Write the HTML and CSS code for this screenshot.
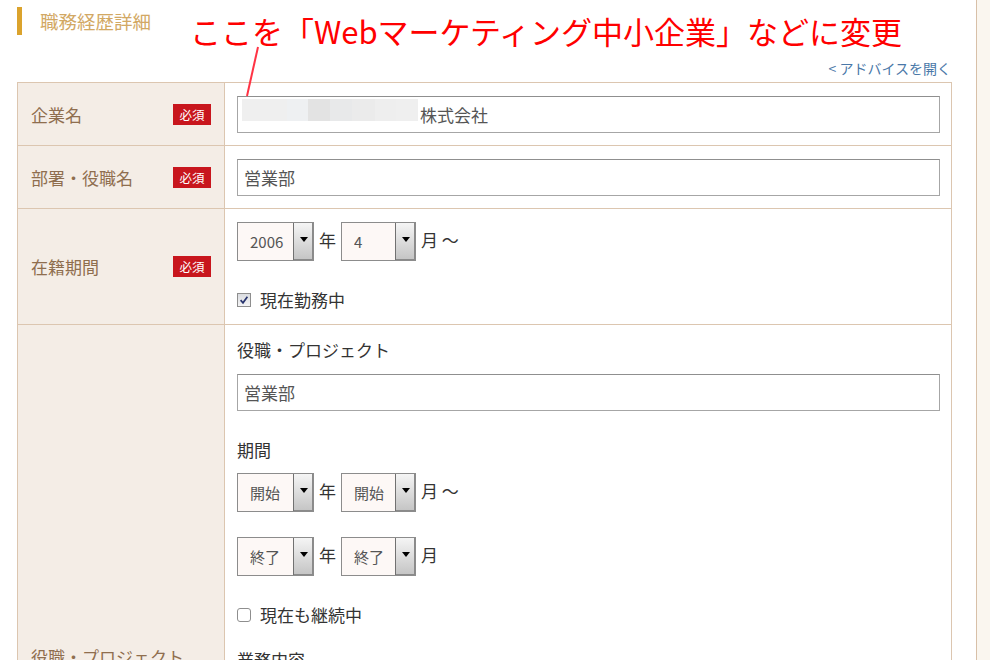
FILE: index.html
```html
<!DOCTYPE html>
<html lang="ja">
<head>
    <meta charset="UTF-8" />
    <title>職務経歴詳細</title>
    <link rel="stylesheet" href="styles.css">
</head>
<body>
<div class="page">
    <div class="main">
        <h2 class="section-title">職務経歴詳細</h2>
        <p class="advice"><a href="#">&lt; アドバイスを開く</a></p>

        <div class="form-table">
            <div class="row">
                <div class="label">企業名<span class="req">必須</span></div>
                <div class="field">
                    <input type="text" class="text masked" value="株式会社" />
                </div>
            </div>

            <div class="row">
                <div class="label">部署・役職名<span class="req">必須</span></div>
                <div class="field">
                    <input type="text" class="text" value="営業部" />
                </div>
            </div>

            <div class="row">
                <div class="label">在籍期間<span class="req">必須</span></div>
                <div class="field">
                    <div class="date-row">
                        <span class="select wide"><select><option>2006</option></select><span class="arrow"></span></span>
                        <span class="unit">年</span>
                        <span class="select"><select><option>4</option></select><span class="arrow"></span></span>
                        <span class="unit">月 〜</span>
                    </div>
                    <label class="check space-l">
                        <span class="box checked">
                            <svg width="12" height="12" viewBox="0 0 12 12"><path d="M2.6 6.2 L5 8.8 L9.4 2.8" fill="none" stroke="#27346e" stroke-width="1.7"/></svg>
                        </span>
                        現在勤務中
                    </label>
                </div>
            </div>

            <div class="row">
                <div class="label">役職・プロジェクト</div>
                <div class="field">
                    <div class="sub-label">役職・プロジェクト</div>
                    <input type="text" class="text space-s" value="営業部" />

                    <div class="sub-label space-l">期間</div>
                    <div class="date-row space-s">
                        <span class="select wide"><select><option>開始</option></select><span class="arrow"></span></span>
                        <span class="unit">年</span>
                        <span class="select"><select><option>開始</option></select><span class="arrow"></span></span>
                        <span class="unit">月 〜</span>
                    </div>
                    <div class="date-row space-m">
                        <span class="select wide"><select><option>終了</option></select><span class="arrow"></span></span>
                        <span class="unit">年</span>
                        <span class="select"><select><option>終了</option></select><span class="arrow"></span></span>
                        <span class="unit">月</span>
                    </div>
                    <label class="check space-l">
                        <span class="box"></span>
                        現在も継続中
                    </label>

                    <div class="sub-label space-work">業務内容</div>
                    <textarea class="textarea space-s"></textarea>
                </div>
            </div>
        </div>

        <!-- 注釈 -->
        <div class="note">ここを「Webマーケティング中小企業」などに変更</div>
        <svg class="note-line" width="24" height="56" viewBox="0 0 24 56">
            <line x1="18" y1="3" x2="7" y2="52" stroke="#ff3344" stroke-width="2" />
        </svg>
    </div>
    <div class="side"></div>
</div>
</body>
</html>
```

FILE: styles.css
```css
:root {
    --gold: #dba32d;
    --gold-text: #d2a864;
    --label-bg: #f4ede6;
    --label-text: #8f6e4e;
    --line: #dcc6b0;
    --side-bg: #faf6ef;
    --req: #c8161d;
    --link: #4a78a8;
    --text: #333;
}
body {
    font-family: "Noto Sans CJK JP", "Noto Sans", sans-serif;
    color: var(--text);
    background-color: #fff;
    margin: 0;
}
.page {
    display: flex;
    min-height: 100vh;
}
.main {
    position: relative;
    width: 977px;
    box-sizing: border-box;
    padding: 7px 24px 40px 17px;
    border-right: 1px solid #d8c0a8;
}
.side {
    flex: 1;
    background-color: var(--side-bg);
}
.section-title {
    margin: 0;
    height: 28px;
    line-height: 28px;
    border-left: 5px solid var(--gold);
    padding-left: 18px;
    font-size: 18.5px;
    font-weight: normal;
    color: var(--gold-text);
}
.advice {
    margin: 23px 1px 0 0;
    text-align: right;
    font-size: 14px;
    line-height: 20px;
}
.advice a {
    color: var(--link);
    text-decoration: none;
}
.form-table {
    margin-top: 4px;
    border: 1px solid var(--line);
}
.row {
    display: grid;
    grid-template-columns: 207px 1fr;
}
.row + .row {
    border-top: 1px solid var(--line);
}
.label {
    box-sizing: border-box;
    background-color: var(--label-bg);
    border-right: 1px solid var(--line);
    display: flex;
    align-items: center;
    justify-content: space-between;
    padding: 0 13px;
    font-size: 17px;
    color: var(--label-text);
}
.req {
    width: 38px;
    height: 21px;
    background-color: var(--req);
    color: #fff;
    font-size: 12.5px;
    display: flex;
    align-items: center;
    justify-content: center;
}
.field {
    padding: 13px 11px 12px 12px;
}
.text {
    display: block;
    width: 100%;
    height: 37px;
    box-sizing: border-box;
    border: 1px solid #a6a6a6;
    border-top-color: #8f8f8f;
    padding: 0 6px;
    font-family: inherit;
    font-size: 17px;
    color: #555;
    background-color: #fff;
}
.masked {
    padding-left: 182px;
    background-image: linear-gradient(to right,
        #efefef 0 45px, #eef0f2 45px 66px, #e3e3e3 66px 88px,
        #e8e9ea 88px 110px, #ebebeb 110px 133px, #eeeeee 133px 154px,
        #efefef 154px 176px);
    background-size: 176px 22px;
    background-position: 4px 2px;
    background-repeat: no-repeat;
}
.date-row {
    display: flex;
    align-items: center;
}
.select {
    display: inline-flex;
    height: 39px;
    box-sizing: border-box;
    border: 1px solid #8c8c8c;
}
.select select {
    appearance: none;
    -webkit-appearance: none;
    border: none;
    outline: none;
    width: 53px;
    height: 100%;
    padding: 0 0 0 12px;
    background-color: #fdf8f6;
    font-family: inherit;
    font-size: 15px;
    color: #555;
}
.select.wide select {
    width: 55px;
}
.arrow {
    width: 19px;
    border-left: 1px solid #717171;
    box-shadow: inset -1px -1px 0 #8a8a8a;
    background: linear-gradient(#f5f5f5, #c4c4c4);
    display: flex;
    align-items: center;
    justify-content: center;
}
.arrow::after {
    content: "";
    border-left: 4px solid transparent;
    border-right: 4px solid transparent;
    border-top: 5px solid #000;
    margin-bottom: 4px;
}
.unit {
    margin: 0 5px 4px;
    font-size: 17px;
}
.check {
    display: flex;
    align-items: center;
    gap: 9px;
    font-size: 17px;
    line-height: 24px;
}
.box {
    width: 14px;
    height: 14px;
    box-sizing: border-box;
    border: 1px solid #8e8e8e;
    border-radius: 3px;
    background-color: #fff;
    display: flex;
    align-items: center;
    justify-content: center;
}
.box.checked {
    border-radius: 0;
    background: linear-gradient(#dadce0, #f4f4f5);
}
.sub-label {
    font-size: 17px;
    line-height: 24px;
}
.textarea {
    display: block;
    width: 100%;
    height: 291px;
    box-sizing: border-box;
    border: 1px solid #a6a6a6;
    resize: none;
}
.space-s { margin-top: 12px; }
.date-row.space-s { margin-top: 11px; }
.space-m { margin-top: 25px; }
.space-l { margin-top: 27px; }
.space-work { margin-top: 21px; }
.note {
    position: absolute;
    left: 190px;
    top: 15px;
    font-size: 31px;
    line-height: 31px;
    color: #ff0000;
    white-space: nowrap;
}
.note-line {
    position: absolute;
    left: 240px;
    top: 44px;
}
```
